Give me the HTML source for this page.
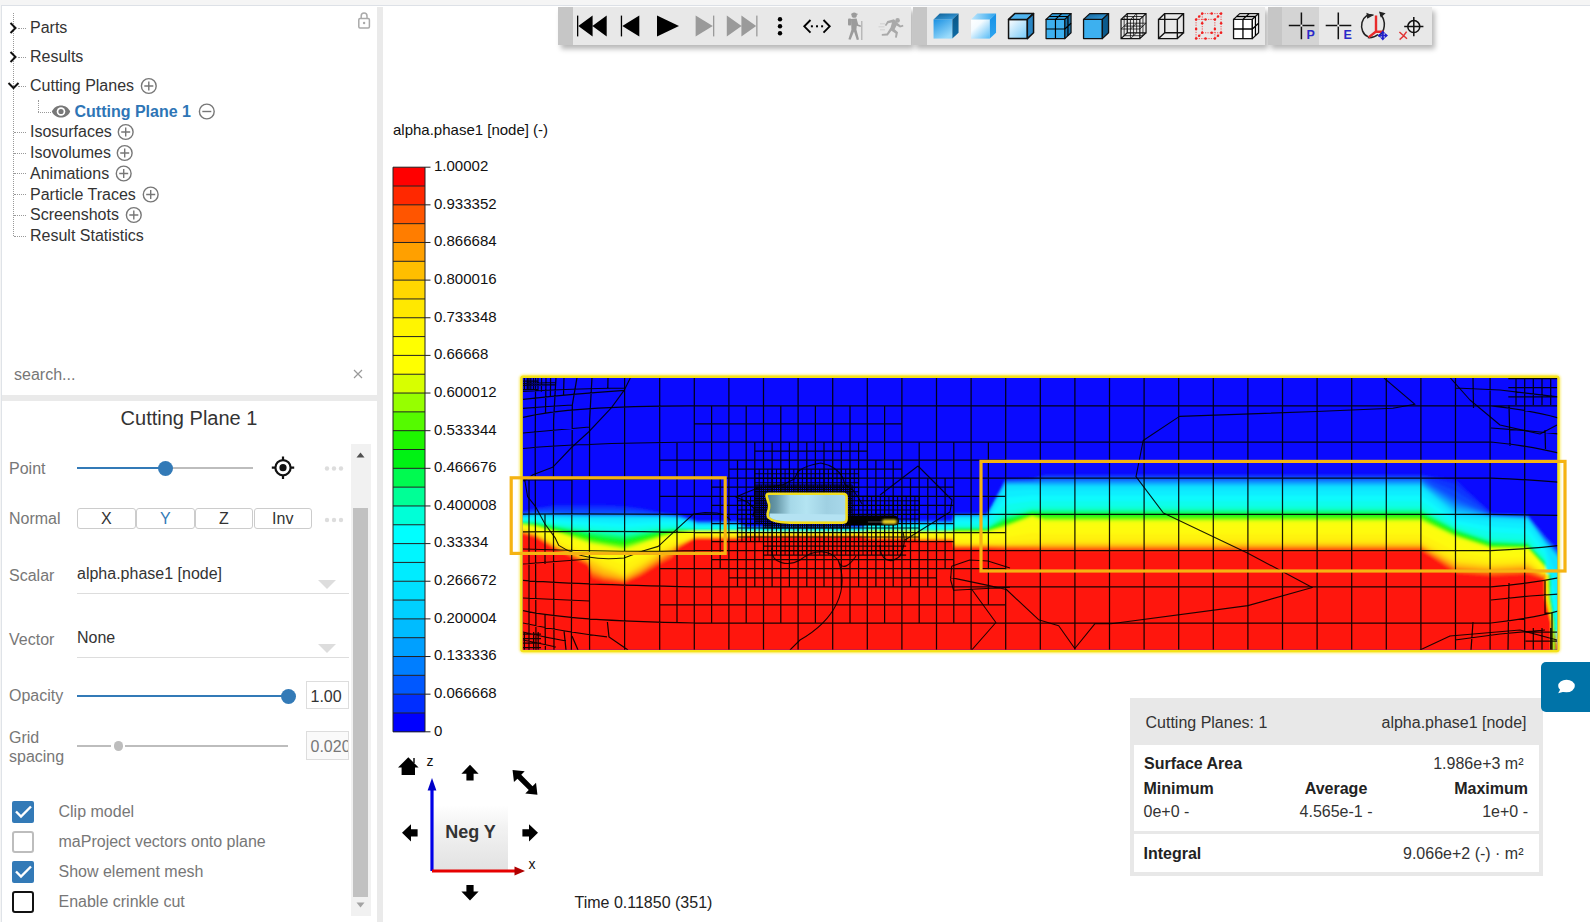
<!DOCTYPE html>
<html lang="en"><head><meta charset="utf-8"><title>Cutting Plane Viewer</title>
<style>
*{box-sizing:border-box;margin:0;padding:0}
html,body{width:1590px;height:922px;overflow:hidden;background:#f5f5f5;font-family:"Liberation Sans",Arial,sans-serif;font-size:16px;color:#333}
.abs{position:absolute}
#frame{position:absolute;left:1px;top:5px;width:1589px;height:917px;background:#fff;border-top:1px solid #dde1e7;border-left:1px solid #dfe3e8}
#vsplit{position:absolute;left:377px;top:7px;width:6px;height:915px;background:#eaeaea}
#hsplit{position:absolute;left:2px;top:395px;width:375px;height:6px;background:#eaeaea}
.t{position:absolute;white-space:nowrap;line-height:20px;height:20px}
.tree .t{color:#333}
.g{color:#777}
.dot-h{position:absolute;height:0;border-top:1px dotted #999}
.dot-v{position:absolute;width:0;border-left:1px dotted #999}
.nbtn{position:absolute;top:508px;height:21px;border:1px solid #ccc;border-radius:3px;background:#fff;text-align:center;line-height:20px;font-size:16px;color:#333}
.uline{position:absolute;height:1px;background:#ddd;left:77px;width:272px}
.vbox{position:absolute;left:306px;width:43px;height:28px;border:1px solid #ddd;font-size:16px;line-height:26px;padding-left:3.5px;padding-top:1.5px;overflow:hidden;white-space:nowrap}
.cb{position:absolute;left:12px;width:22px;height:22px;border-radius:2px}
.cb.on{background:#337ab7}
.tb{position:absolute;top:7px;height:38px;background:#e8e8e8;box-shadow:3px 4px 5px rgba(0,0,0,.28)}
.tb .h{position:absolute;left:0;top:0;height:38px;background:#c6c6c6}
.tb svg{position:absolute;top:0;left:0}
.lab{position:absolute;font-size:15px;color:#111;line-height:18px;height:18px;left:434px;white-space:nowrap}
.st{position:absolute;white-space:nowrap;line-height:20px;height:20px;font-size:16px;color:#333}
.b{font-weight:bold;color:#222}
</style></head><body>
<div id="frame"></div>
<div id="vsplit"></div>
<div id="hsplit"></div>

<!-- ===== TREE ===== -->
<div class="tree">
<div class="dot-v" style="left:13px;top:13px;height:223px"></div>
<div class="dot-h" style="left:18px;top:28px;width:8px"></div>
<div class="dot-h" style="left:18px;top:57px;width:8px"></div>
<div class="dot-h" style="left:18px;top:86px;width:8px"></div>
<div class="dot-v" style="left:38px;top:100px;height:12px"></div>
<div class="dot-h" style="left:38px;top:112px;width:13px"></div>
<div class="dot-h" style="left:14px;top:132px;width:12px"></div>
<div class="dot-h" style="left:14px;top:153px;width:12px"></div>
<div class="dot-h" style="left:14px;top:173px;width:12px"></div>
<div class="dot-h" style="left:14px;top:194px;width:12px"></div>
<div class="dot-h" style="left:14px;top:215px;width:12px"></div>
<div class="dot-h" style="left:14px;top:236px;width:12px"></div>
<svg class="abs" style="left:0;top:0" width="380" height="260" fill="none">
 <path d="M10.5 23 L15.5 28 L10.5 33" stroke="#111" stroke-width="2"/>
 <path d="M10.5 52 L15.5 57 L10.5 62" stroke="#111" stroke-width="2"/>
 <path d="M8.5 83 L13.5 88 L18.5 83" stroke="#111" stroke-width="2"/>
 <g stroke="#777" stroke-width="1.4">
  <circle cx="148.8" cy="86" r="7.4"/><path d="M144.3 86h9M148.8 81.5v9"/>
  <circle cx="125.7" cy="132" r="7.4"/><path d="M121.2 132h9M125.7 127.5v9"/>
  <circle cx="124.7" cy="153" r="7.4"/><path d="M120.2 153h9M124.7 148.5v9"/>
  <circle cx="123.7" cy="173.5" r="7.4"/><path d="M119.2 173.5h9M123.7 169v9"/>
  <circle cx="150.7" cy="194.5" r="7.4"/><path d="M146.2 194.5h9M150.7 190v9"/>
  <circle cx="133.8" cy="215" r="7.4"/><path d="M129.3 215h9M133.8 210.5v9"/>
  <circle cx="206.8" cy="111.5" r="7.4"/><path d="M202.3 111.5h9"/>
 </g>
 <!-- eye -->
 <path d="M51.8 111.5 C55.5 103.4 66.5 103.4 70.2 111.5 C66.5 119.6 55.5 119.6 51.8 111.5Z" fill="#777"/>
 <circle cx="61" cy="111.5" r="4.3" fill="#fff"/><circle cx="61" cy="111.5" r="2.6" fill="#777"/>
 <!-- lock -->
 <g stroke="#aaa" stroke-width="1.5"><rect x="358.8" y="18.5" width="10.6" height="9.4" rx="1.2"/><path d="M361.2 18.5v-2.6a2.9 2.9 0 0 1 5.8 0v2.6"/></g>
 <circle cx="364.1" cy="23" r="1.2" fill="#aaa"/>
</svg>
<div class="t" style="left:30px;top:18px">Parts</div>
<div class="t" style="left:30px;top:47px">Results</div>
<div class="t" style="left:30px;top:76px">Cutting Planes</div>
<div class="t" style="left:74.5px;top:102px;font-weight:bold;color:#2e75b6">Cutting Plane 1</div>
<div class="t" style="left:30px;top:122px">Isosurfaces</div>
<div class="t" style="left:30px;top:143px">Isovolumes</div>
<div class="t" style="left:30px;top:164px">Animations</div>
<div class="t" style="left:30px;top:185px">Particle Traces</div>
<div class="t" style="left:30px;top:205px">Screenshots</div>
<div class="t" style="left:30px;top:226px">Result Statistics</div>
</div>

<!-- search -->
<div class="t g" style="left:14px;top:365px;color:#777">search...</div>
<svg class="abs" style="left:352px;top:368px" width="12" height="12"><path d="M2 2l8 8M10 2l-8 8" stroke="#999" stroke-width="1.2"/></svg>

<!-- ===== PROPERTIES ===== -->
<div class="t" style="left:3px;width:372px;text-align:center;top:407px;font-size:20px;color:#333;line-height:22px;height:22px">Cutting Plane 1</div>
<div class="abs" style="left:351px;top:444px;width:20px;height:472px;background:#f1f1f1"></div>
<div class="abs" style="left:353px;top:508px;width:15px;height:389px;background:#c1c1c1"></div>
<svg class="abs" style="left:351px;top:444px" width="20" height="472"><path d="M5.5 13.5h8l-4-5z" fill="#505050"/><path d="M5.5 458.5h8l-4 5z" fill="#a3a3a3"/></svg>

<div class="t g" style="left:9px;top:459px">Point</div>
<div class="abs" style="left:77px;top:467px;width:176px;height:2px;background:#bdbdbd"></div>
<div class="abs" style="left:77px;top:467px;width:88px;height:2px;background:#337ab7"></div>
<div class="abs" style="left:157.5px;top:460.5px;width:15px;height:15px;border-radius:50%;background:#337ab7"></div>
<svg class="abs" style="left:270px;top:455px" width="26" height="26" fill="none" stroke="#111"><circle cx="13" cy="12.7" r="7.6" stroke-width="2.2"/><circle cx="13" cy="12.7" r="3.6" fill="#111" stroke="none"/><path d="M13 1.5v4M13 20v4M1.8 12.7h4M20.2 12.7h4" stroke-width="2.2"/></svg>
<svg class="abs" style="left:322px;top:462px" width="24" height="70" fill="#ddd"><circle cx="5" cy="6.5" r="2.2"/><circle cx="12" cy="6.5" r="2.2"/><circle cx="19" cy="6.5" r="2.2"/><circle cx="5" cy="58" r="2.2"/><circle cx="12" cy="58" r="2.2"/><circle cx="19" cy="58" r="2.2"/></svg>

<div class="t g" style="left:9px;top:509px">Normal</div>
<div class="nbtn" style="left:77px;width:58.5px">X</div>
<div class="nbtn" style="left:136px;width:58.5px;color:#337ab7">Y</div>
<div class="nbtn" style="left:195px;width:58px">Z</div>
<div class="nbtn" style="left:253.5px;width:58.5px">Inv</div>

<div class="t g" style="left:9px;top:566px">Scalar</div>
<div class="t" style="left:77px;top:564px;color:#333">alpha.phase1 [node]</div>
<svg class="abs" style="left:316px;top:578px" width="22" height="14"><path d="M2 2h18l-9 9z" fill="#ddd"/></svg>
<div class="uline" style="top:593px"></div>

<div class="t g" style="left:9px;top:630px">Vector</div>
<div class="t" style="left:77px;top:628px;color:#333">None</div>
<svg class="abs" style="left:316px;top:642px" width="22" height="14"><path d="M2 2h18l-9 9z" fill="#ddd"/></svg>
<div class="uline" style="top:657px"></div>

<div class="t g" style="left:9px;top:686px">Opacity</div>
<div class="abs" style="left:77px;top:695px;width:211px;height:2px;background:#337ab7"></div>
<div class="abs" style="left:280.5px;top:688.5px;width:15px;height:15px;border-radius:50%;background:#337ab7"></div>
<div class="vbox" style="top:681px;color:#333;background:#fff">1.00</div>

<div class="t g" style="left:9px;top:728px">Grid</div>
<div class="t g" style="left:9px;top:747px">spacing</div>
<div class="abs" style="left:77px;top:745px;width:211px;height:1.5px;background:#bdbdbd"></div>
<div class="abs" style="left:111px;top:740px;width:14px;height:11px;background:#fff"></div>
<div class="abs" style="left:113.5px;top:741px;width:9.5px;height:9.5px;border-radius:50%;background:#bdbdbd"></div>
<div class="vbox" style="top:731px;color:#777;background:#fafafa;height:29px">0.020</div>

<div class="cb on" style="top:800.5px"></div>
<div class="cb" style="top:830.5px;border:2px solid #bdbdbd;border-radius:3px"></div>
<div class="cb on" style="top:860.5px"></div>
<div class="cb" style="top:890.5px;border:2px solid #111;border-radius:3px"></div>
<svg class="abs" style="left:12px;top:800px" width="22" height="90" fill="none" stroke="#fff" stroke-width="2.4"><path d="M4 11.5l5 5L19 6.5"/><path d="M4 71.5l5 5L19 66.5"/></svg>
<div class="t g" style="left:58.5px;top:802px">Clip model</div>
<div class="t g" style="left:58.5px;top:832px">maProject vectors onto plane</div>
<div class="t g" style="left:58.5px;top:862px">Show element mesh</div>
<div class="t g" style="left:58.5px;top:892px">Enable crinkle cut</div>

<!-- ===== TOOLBARS ===== -->
<div class="tb" style="left:558px;width:353px"><div class="h" style="width:15px"></div>
<svg width="353" height="38"><rect x="19" y="8.6" width="1.3" height="20.8" fill="#000"/><path d="M20.3 19 L34.6 8.6 V29.4Z M34.4 19 L48.7 8.6 V29.4Z" fill="#000"/><rect x="62.8" y="8.6" width="1.3" height="20.8" fill="#000"/><path d="M64.3 19 L81.3 8.6 V29.4Z" fill="#000"/><path d="M99 8.4 L121 19 L99 29.6Z" fill="#000"/><path d="M137.6 8.6 L154.8 19 L137.6 29.4Z" fill="#9a9a9a"/><rect x="155" y="8.6" width="1.3" height="20.8" fill="#9a9a9a"/><path d="M168.8 8.6 L183.6 19 L168.8 29.4Z M183.4 8.6 L198.2 19 L183.4 29.4Z" fill="#9a9a9a"/><rect x="198.2" y="8.6" width="1.3" height="20.8" fill="#9a9a9a"/><circle cx="222" cy="12.3" r="2.2" fill="#000"/><circle cx="222" cy="19.3" r="2.2" fill="#000"/><circle cx="222" cy="26.3" r="2.2" fill="#000"/><path d="M252.5 13 L246.3 19.3 L252.5 25.6 M265.5 13 L271.7 19.3 L265.5 25.6" fill="none" stroke="#000" stroke-width="1.9"/><rect x="252.9" y="18.3" width="2" height="2" fill="#000"/><rect x="258" y="18.3" width="2" height="2" fill="#000"/><rect x="263.1" y="18.3" width="2" height="2" fill="#000"/><g fill="#9b9b9b" stroke="none"><circle cx="296.2" cy="8.2" r="2.6"/><path d="M293.2 6.6h6.4v1.2h-6.4z"/><path d="M293 12 L298.6 11.6 L300.2 17.4 L303 18.6 L302.6 20 L298.8 18.8 L298.4 22.6 L301 32.6 L298.8 33 L296 24.6 L292.6 32.8 L290.4 32.2 L293.4 22.8Z"/><rect x="290" y="11.5" width="3.2" height="7" rx="1"/><rect x="303.4" y="14" width="0.9" height="19"/></g><g fill="#a9a9a9" stroke="none"><circle cx="339.6" cy="13.4" r="2.3"/><path d="M329.4 14 L336 12.2 L339 15.6 L342.6 18.4 L345 17.8 L345.4 19.4 L342 20.4 L338.6 18.4 L336.6 22.2 L340 25.2 L338.8 30.8 L337 30.4 L337.6 26.4 L333.4 23.8 L329.8 28.6 L323.8 28.8 L323.8 27 L328.8 26.6 L332.6 20.6 L334 15.6 L330.2 16.2 L328.2 19 L326.8 18.2Z"/><path d="M322 16.5h5v.7h-5zM320.5 19.5h6v.7h-6zM322 22.5h5v.7h-5z" fill="#c8c8c8"/></g></svg>
</div>
<div class="tb" style="left:913px;width:352px"><div class="h" style="width:14px"></div>
<svg width="352" height="38"><defs><linearGradient id="gF1" x1="0" y1="0" x2="0.6" y2="1"><stop offset="0" stop-color="#1990e2"/><stop offset="1" stop-color="#9adbfb"/></linearGradient><linearGradient id="gT1" x1="0" y1="0" x2="1" y2="1"><stop offset="0" stop-color="#0d5c92"/><stop offset="1" stop-color="#3fa6e6"/></linearGradient><linearGradient id="gS1" x1="0" y1="0" x2="0" y2="1"><stop offset="0" stop-color="#095585"/><stop offset="1" stop-color="#0e6ca6"/></linearGradient><linearGradient id="gF2" x1="0" y1="0" x2="0.9" y2="1"><stop offset="0" stop-color="#ffffff"/><stop offset="0.35" stop-color="#f4fbff"/><stop offset="1" stop-color="#63c1f7"/></linearGradient><linearGradient id="gS2" x1="0" y1="0" x2="0" y2="1"><stop offset="0" stop-color="#1691e6"/><stop offset="1" stop-color="#2ea4ef"/></linearGradient><linearGradient id="gT2" x1="0" y1="0" x2="1" y2="0"><stop offset="0" stop-color="#bfe7fc"/><stop offset="1" stop-color="#2aa3ee"/></linearGradient><linearGradient id="gF3" x1="0" y1="0" x2="0.9" y2="1"><stop offset="0" stop-color="#ffffff"/><stop offset="1" stop-color="#79cbf8"/></linearGradient></defs><path d="M20.55 12.4 H39.35 V31.6 H20.55Z" fill="url(#gF1)"/><path d="M20.55 12.4 L26.75 6.6000000000000005 H45.550000000000004 L39.35 12.4Z" fill="url(#gT1)"/><path d="M39.35 12.4 L45.550000000000004 6.6000000000000005 V25.8 L39.35 31.6Z" fill="url(#gS1)"/><path d="M58.05 12.4 H76.85 V31.6 H58.05Z" fill="url(#gF2)"/><path d="M58.05 12.4 L64.25 6.6000000000000005 H83.05 L76.85 12.4Z" fill="url(#gT2)"/><path d="M76.85 12.4 L83.05 6.6000000000000005 V25.8 L76.85 31.6Z" fill="url(#gS2)"/><path d="M95.55 12.4 H114.35 V31.6 H95.55Z" fill="url(#gF3)" stroke="#111" stroke-width="1.5" stroke-linejoin="round"/><path d="M95.55 12.4 L101.75 6.6000000000000005 H120.55 L114.35 12.4Z" fill="#4fb3ee" stroke="#111" stroke-width="1.5" stroke-linejoin="round"/><path d="M114.35 12.4 L120.55 6.6000000000000005 V25.8 L114.35 31.6Z" fill="#2a86c4" stroke="#111" stroke-width="1.5" stroke-linejoin="round"/><path d="M133.05 12.4 H151.85 V31.6 H133.05Z" fill="#3db0ef" stroke="#111" stroke-width="1.2" stroke-linejoin="round"/><path d="M133.05 12.4 L139.25 6.6000000000000005 H158.04999999999998 L151.85 12.4Z" fill="#2f9ddc" stroke="#111" stroke-width="1.2" stroke-linejoin="round"/><path d="M151.85 12.4 L158.04999999999998 6.6000000000000005 V25.8 L151.85 31.6Z" fill="#1673ad" stroke="#111" stroke-width="1.2" stroke-linejoin="round"/><path d="M142.45 12.4 V31.6 M133.05 22.0 H151.85 M142.45 12.4 L148.64999999999998 6.6000000000000005 M136.15 9.5 H154.95 M154.95 9.5 V28.700000000000003 M151.85 22.0 L158.04999999999998 16.2" fill="none" stroke="#000" stroke-width="1.2"/><path d="M170.55 12.4 H189.35 V31.6 H170.55Z" fill="#3db0ef" stroke="#111" stroke-width="1.3" stroke-linejoin="round"/><path d="M170.55 12.4 L176.75 6.6000000000000005 H195.54999999999998 L189.35 12.4Z" fill="url(#gT1)" stroke="#111" stroke-width="1.3" stroke-linejoin="round"/><path d="M189.35 12.4 L195.54999999999998 6.6000000000000005 V25.8 L189.35 31.6Z" fill="#0b5a8c" stroke="#111" stroke-width="1.3" stroke-linejoin="round"/><path d="M208.05 12.4 H226.85 V31.6 H208.05Z M214.25 6.6000000000000005 H233.04999999999998 V25.8 H214.25Z M208.05 12.4 L214.25 6.6000000000000005 M226.85 12.4 L233.04999999999998 6.6000000000000005 M226.85 31.6 L233.04999999999998 25.8 M208.05 31.6 L214.25 25.8" fill="none" stroke="#111" stroke-width="1.2"/><path d="M217.45 12.4 V31.6 M208.05 22.0 H226.85 M223.64999999999998 6.6000000000000005 V25.8 M214.25 16.2 H233.04999999999998 M217.45 12.4 L223.64999999999998 6.6000000000000005 M217.45 31.6 L223.64999999999998 25.8 M208.05 22.0 L214.25 16.2 M226.85 22.0 L233.04999999999998 16.2 M211.15 9.5 H229.95 V28.700000000000003 H211.15Z M217.45 22.0 L223.64999999999998 16.2 M220.54999999999998 9.5 V28.700000000000003 M211.15 19.1 H229.95" fill="none" stroke="#111" stroke-width="0.8"/><path d="M245.55 12.4 H264.35 V31.6 H245.55Z M251.75 6.6000000000000005 H270.55 V25.8 H251.75Z M245.55 12.4 L251.75 6.6000000000000005 M264.35 12.4 L270.55 6.6000000000000005 M264.35 31.6 L270.55 25.8 M245.55 31.6 L251.75 25.8" fill="none" stroke="#111" stroke-width="1.4"/><path d="M283.05 12.4 H301.85 V31.6 H283.05Z M289.25 6.6000000000000005 H308.05 V25.8 H289.25Z M283.05 12.4 L289.25 6.6000000000000005 M301.85 12.4 L308.05 6.6000000000000005 M301.85 31.6 L308.05 25.8 M283.05 31.6 L289.25 25.8" fill="none" stroke="#f04040" stroke-width="0.9" stroke-dasharray="1.2 1.2"/><circle cx="283.1" cy="12.4" r="1.25" fill="#f02020"/><circle cx="283.1" cy="22.0" r="1.25" fill="#f02020"/><circle cx="283.1" cy="31.6" r="1.25" fill="#f02020"/><circle cx="292.5" cy="12.4" r="1.25" fill="#f02020"/><circle cx="292.5" cy="31.6" r="1.25" fill="#f02020"/><circle cx="301.9" cy="12.4" r="1.25" fill="#f02020"/><circle cx="301.9" cy="22.0" r="1.25" fill="#f02020"/><circle cx="301.9" cy="31.6" r="1.25" fill="#f02020"/><circle cx="289.2" cy="6.6" r="1.25" fill="#f02020"/><circle cx="289.2" cy="16.2" r="1.25" fill="#f02020"/><circle cx="289.2" cy="25.8" r="1.25" fill="#f02020"/><circle cx="298.7" cy="6.6" r="1.25" fill="#f02020"/><circle cx="298.7" cy="25.8" r="1.25" fill="#f02020"/><circle cx="308.1" cy="6.6" r="1.25" fill="#f02020"/><circle cx="308.1" cy="16.2" r="1.25" fill="#f02020"/><circle cx="308.1" cy="25.8" r="1.25" fill="#f02020"/><circle cx="286.2" cy="9.5" r="1.25" fill="#f02020"/><circle cx="286.2" cy="28.7" r="1.25" fill="#f02020"/><circle cx="305.0" cy="9.5" r="1.25" fill="#f02020"/><circle cx="305.0" cy="28.7" r="1.25" fill="#f02020"/><path d="M320.55 12.4 H339.35 V31.6 H320.55Z" fill="#fff" stroke="#111" stroke-width="1.3" stroke-linejoin="round"/><path d="M320.55 12.4 L326.75 6.6000000000000005 H345.55 L339.35 12.4Z" fill="#fff" stroke="#111" stroke-width="1.3" stroke-linejoin="round"/><path d="M339.35 12.4 L345.55 6.6000000000000005 V25.8 L339.35 31.6Z" fill="#fff" stroke="#111" stroke-width="1.3" stroke-linejoin="round"/><path d="M329.95000000000005 12.4 V31.6 M320.55 22.0 H339.35 M329.95000000000005 12.4 L336.15000000000003 6.6000000000000005 M323.65000000000003 9.5 H342.45000000000005 M342.45000000000005 9.5 V28.700000000000003 M339.35 22.0 L345.55 16.2" fill="none" stroke="#000" stroke-width="1.3"/></svg>
</div>
<div class="tb" style="left:1267.5px;width:164.5px"><div class="h" style="width:14px"></div><div style="position:absolute;left:14px;top:0;width:37.5px;height:38px;background:#d4d4d4"></div>
<svg width="165" height="38" style="font-family:'Liberation Sans',sans-serif"><path d="M33.4 5.6 V32.2 M20.799999999999997 18.6 H46.4" stroke="#111" stroke-width="1.5" fill="none"/><rect x="32.4" y="17.6" width="2" height="2" fill="#fff"/><text x="38.6" y="32.4" font-size="12.5" font-weight="bold" fill="#2a2ac8">P</text><path d="M70.3 5.6 V32.2 M57.699999999999996 18.6 H83.3" stroke="#111" stroke-width="1.5" fill="none"/><rect x="69.3" y="17.6" width="2" height="2" fill="#fff"/><text x="75.5" y="32.4" font-size="12.5" font-weight="bold" fill="#2a2ac8">E</text><g fill="none" stroke="#222" stroke-width="1.5"><path d="M105.5 8.2 A9 11 0 0 0 100 29.6"/><path d="M99.8 30.6 A14 14 0 0 0 110 27.5"/><path d="M110.2 29.2 A11 13 0 0 0 112.4 7.6"/></g><path d="M98.4 5.8 L105 8.4 L99.2 11.8Z M111 4.4 L117.6 6.2 L112.8 10.6Z" fill="#222"/><path d="M108 8.5 V24.5 L116 24.8 M108 24.5 L100.6 30.4" stroke="#e82a2a" stroke-width="2.4" fill="none"/><g fill="#2222cc"><path d="M114.8 23.4 l2.6 3 h-5.2z M114.8 33.6 l2.6 -3 h-5.2z M109.6 28.5 l3 -2.6 v5.2z M120 28.5 l-3 -2.6 v5.2z"/><rect x="113.9" y="25" width="1.8" height="7"/><rect x="111.3" y="27.6" width="7" height="1.8"/></g><circle cx="145.8" cy="19.6" r="6" fill="none" stroke="#111" stroke-width="1.5"/><path d="M145.8 10.000000000000002 V29.200000000000003 M136.20000000000002 19.6 H155.4" stroke="#111" stroke-width="1.5"/><path d="M131.4 25 L139 31.8 M138.6 24.6 C136.5 28 134 31 131.6 32.6" stroke="#e03434" stroke-width="1.5" fill="none"/></svg>
</div>

<!-- ===== LEGEND ===== -->
<div class="t" style="left:393px;top:120px;font-size:15px;color:#111">alpha.phase1 [node] (-)</div>
<svg class="abs" style="left:0;top:0" width="520" height="745">
<rect x="393" y="167.20" width="32" height="19.12" fill="rgb(255, 0, 0)"/>
<rect x="393" y="186.02" width="32" height="19.12" fill="rgb(255, 40, 0)"/>
<rect x="393" y="204.84" width="32" height="19.12" fill="rgb(255, 85, 0)"/>
<rect x="393" y="223.66" width="32" height="19.12" fill="rgb(255, 125, 0)"/>
<rect x="393" y="242.48" width="32" height="19.12" fill="rgb(255, 160, 0)"/>
<rect x="393" y="261.30" width="32" height="19.12" fill="rgb(255, 190, 0)"/>
<rect x="393" y="280.12" width="32" height="19.12" fill="rgb(255, 215, 0)"/>
<rect x="393" y="298.94" width="32" height="19.12" fill="rgb(255, 232, 0)"/>
<rect x="393" y="317.76" width="32" height="19.12" fill="rgb(255, 245, 0)"/>
<rect x="393" y="336.58" width="32" height="19.12" fill="rgb(255, 255, 0)"/>
<rect x="393" y="355.40" width="32" height="19.12" fill="rgb(255, 255, 0)"/>
<rect x="393" y="374.22" width="32" height="19.12" fill="rgb(215, 255, 0)"/>
<rect x="393" y="393.04" width="32" height="19.12" fill="rgb(150, 255, 0)"/>
<rect x="393" y="411.86" width="32" height="19.12" fill="rgb(85, 250, 0)"/>
<rect x="393" y="430.68" width="32" height="19.12" fill="rgb(30, 245, 0)"/>
<rect x="393" y="449.50" width="32" height="19.12" fill="rgb(0, 242, 20)"/>
<rect x="393" y="468.32" width="32" height="19.12" fill="rgb(0, 250, 80)"/>
<rect x="393" y="487.14" width="32" height="19.12" fill="rgb(0, 255, 150)"/>
<rect x="393" y="505.96" width="32" height="19.12" fill="rgb(0, 255, 215)"/>
<rect x="393" y="524.78" width="32" height="19.12" fill="rgb(0, 255, 255)"/>
<rect x="393" y="543.60" width="32" height="19.12" fill="rgb(0, 246, 255)"/>
<rect x="393" y="562.42" width="32" height="19.12" fill="rgb(0, 236, 255)"/>
<rect x="393" y="581.24" width="32" height="19.12" fill="rgb(0, 224, 255)"/>
<rect x="393" y="600.06" width="32" height="19.12" fill="rgb(0, 208, 255)"/>
<rect x="393" y="618.88" width="32" height="19.12" fill="rgb(0, 188, 255)"/>
<rect x="393" y="637.70" width="32" height="19.12" fill="rgb(0, 160, 255)"/>
<rect x="393" y="656.52" width="32" height="19.12" fill="rgb(0, 126, 255)"/>
<rect x="393" y="675.34" width="32" height="19.12" fill="rgb(0, 88, 255)"/>
<rect x="393" y="694.16" width="32" height="19.12" fill="rgb(0, 46, 255)"/>
<rect x="393" y="712.98" width="32" height="19.12" fill="rgb(0, 0, 255)"/>
<path d="M393 167.20H430.5M393 186.02H425M393 204.84H430.5M393 223.66H425M393 242.48H430.5M393 261.30H425M393 280.12H430.5M393 298.94H425M393 317.76H430.5M393 336.58H425M393 355.40H430.5M393 374.22H425M393 393.04H430.5M393 411.86H425M393 430.68H430.5M393 449.50H425M393 468.32H430.5M393 487.14H425M393 505.96H430.5M393 524.78H425M393 543.60H430.5M393 562.42H425M393 581.24H430.5M393 600.06H425M393 618.88H430.5M393 637.70H425M393 656.52H430.5M393 675.34H425M393 694.16H430.5M393 712.98H425M393 731.80H430.5M393 167.2V731.8M425 167.2V731.8" stroke="#222" stroke-width="1" fill="none"/>
</svg>
<div class="lab" style="top:157.0px">1.00002</div>
<div class="lab" style="top:194.6px">0.933352</div>
<div class="lab" style="top:232.3px">0.866684</div>
<div class="lab" style="top:269.9px">0.800016</div>
<div class="lab" style="top:307.6px">0.733348</div>
<div class="lab" style="top:345.2px">0.66668</div>
<div class="lab" style="top:382.8px">0.600012</div>
<div class="lab" style="top:420.5px">0.533344</div>
<div class="lab" style="top:458.1px">0.466676</div>
<div class="lab" style="top:495.8px">0.400008</div>
<div class="lab" style="top:533.4px">0.33334</div>
<div class="lab" style="top:571.0px">0.266672</div>
<div class="lab" style="top:608.7px">0.200004</div>
<div class="lab" style="top:646.3px">0.133336</div>
<div class="lab" style="top:684.0px">0.066668</div>
<div class="lab" style="top:721.6px">0</div>

<!-- ===== PLOT ===== -->
<svg class="abs" style="left:500px;top:365px" width="1080" height="300" viewBox="500 365 1080 300">
<defs><filter id="fb" x="-2%" y="-5%" width="104%" height="110%"><feGaussianBlur stdDeviation="0.9"/></filter><filter id="fb1"><feGaussianBlur stdDeviation="0.8"/></filter><filter id="fb05"><feGaussianBlur stdDeviation="0.45"/></filter><filter id="fglow" x="-2%" y="-5%" width="104%" height="110%"><feGaussianBlur stdDeviation="0.8"/></filter><clipPath id="cp"><rect x="522.8" y="378.0" width="1034.4" height="271.79999999999995"/></clipPath><linearGradient id="gHull" x1="0" y1="0" x2="1" y2="0"><stop offset="0" stop-color="#4f7f90"/><stop offset="0.12" stop-color="#6798a8"/><stop offset="0.3" stop-color="#a6d8e8"/><stop offset="0.5" stop-color="#b4e4f2"/><stop offset="0.75" stop-color="#9fd0e2"/><stop offset="1" stop-color="#a8d8ea"/></linearGradient></defs>
<rect x="521.4" y="376.6" width="1037" height="274.4" rx="2" fill="none" stroke="#fbe84a" stroke-width="4.4" opacity="0.75" filter="url(#fglow)"/>
<rect x="521.6" y="376.8" width="1036.6" height="274" rx="1.6" fill="#00f" stroke="#f5e21a" stroke-width="2.8"/>
<g clip-path="url(#cp)">
<rect x="521.8" y="377.0" width="1036.4" height="273.79999999999995" fill="rgb(10,10,255)"/><g filter="url(#fb)"><path d="M518.0 511.8L521.0 511.8L535.4 507.8L555.0 504.8L588.0 504.8L592.0 504.8L603.7 504.8L624.0 505.8L640.0 507.8L660.0 511.8L672.0 513.3L678.5 513.8L693.4 518.8L697.0 520.3L737.0 520.3L746.0 525.8L862.0 525.8L870.0 520.3L918.5 520.3L919.5 519.8L953.0 519.8L954.0 512.8L987.0 512.8L1005.0 478.8L1032.0 477.8L1045.0 474.3L1421.0 474.3L1456.0 479.8L1491.8 512.8L1527.6 513.8L1545.0 534.8L1559.0 549.8L1561.2 549.8V655.8H518.8Z" fill="rgb(10,35,255)"/><path d="M518.0 512.5L521.0 512.5L535.4 509.0L555.0 506.7L588.0 506.9L592.0 506.9L603.7 506.9L624.0 507.7L640.0 509.4L660.0 512.6L672.0 513.9L678.5 514.4L693.4 519.3L697.0 520.8L737.0 520.8L746.0 526.3L862.0 526.3L870.0 520.8L918.5 520.8L919.5 520.3L953.0 520.3L954.0 513.3L987.0 513.3L1005.0 479.4L1032.0 478.5L1045.0 475.4L1421.0 475.4L1456.0 484.2L1491.8 513.4L1527.6 514.4L1545.0 535.6L1559.0 550.6L1561.2 550.6V655.8H518.8Z" fill="rgb(10,54,255)"/><path d="M518.0 513.4L521.0 513.4L535.4 510.8L555.0 509.5L588.0 510.0L592.0 510.0L603.7 510.0L624.0 510.5L640.0 511.6L660.0 513.7L672.0 514.6L678.5 515.1L693.4 519.8L697.0 521.3L737.0 521.3L746.0 526.7L862.0 526.7L870.0 521.3L918.5 521.3L919.5 520.8L953.0 520.8L954.0 513.8L987.0 513.8L1005.0 480.1L1032.0 479.4L1045.0 477.0L1421.0 477.0L1456.0 491.2L1491.8 514.1L1527.6 515.1L1545.0 536.7L1559.0 551.7L1561.2 551.7V655.8H518.8Z" fill="rgb(10,74,255)"/><path d="M518.0 514.3L521.0 514.3L535.4 512.6L555.0 512.3L588.0 513.2L592.0 513.2L603.7 513.2L624.0 513.3L640.0 513.9L660.0 514.7L672.0 515.3L678.5 515.8L693.4 520.4L697.0 521.9L737.0 521.9L746.0 527.2L862.0 527.2L870.0 521.9L918.5 521.9L919.5 521.4L953.0 521.4L954.0 514.4L987.0 514.4L1005.0 480.8L1032.0 480.3L1045.0 478.6L1421.0 478.6L1456.0 498.2L1491.8 514.8L1527.6 515.8L1545.0 537.7L1559.0 552.7L1561.2 552.7V655.8H518.8Z" fill="rgb(10,95,255)"/><path d="M518.0 514.7L521.0 514.7L535.4 513.2L555.0 513.4L588.0 514.3L592.0 514.3L603.7 514.3L624.0 514.3L640.0 514.8L660.0 515.2L672.0 515.7L678.5 516.2L693.4 520.7L697.0 522.2L737.0 522.2L746.0 527.4L862.0 527.4L870.0 522.2L918.5 522.2L919.5 521.7L953.0 521.7L954.0 514.7L987.0 514.7L1005.0 481.5L1032.0 481.0L1045.0 479.7L1421.0 479.7L1456.0 501.5L1491.8 515.3L1527.6 516.4L1545.0 538.6L1559.0 553.6L1561.2 553.6V655.8H518.8Z" fill="rgb(10,114,255)"/><path d="M518.0 515.0L521.0 515.0L535.4 513.5L555.0 513.9L588.0 514.8L592.0 514.8L603.7 514.8L624.0 514.8L640.0 515.1L660.0 515.5L672.0 516.0L678.5 516.5L693.4 520.9L697.0 522.5L737.0 522.5L746.0 527.6L862.0 527.6L870.0 522.5L918.5 522.5L919.5 522.0L953.0 522.0L954.0 515.0L987.0 515.0L1005.0 482.1L1032.0 481.7L1045.0 480.7L1421.0 480.7L1456.0 503.4L1491.8 515.6L1527.6 516.9L1545.0 539.3L1559.0 554.5L1561.2 554.5V655.8H518.8Z" fill="rgb(10,131,255)"/><path d="M518.0 515.3L521.0 515.3L535.4 513.8L555.0 514.4L588.0 515.2L592.0 515.2L603.7 515.2L624.0 515.2L640.0 515.5L660.0 515.8L672.0 516.3L678.5 516.8L693.4 521.2L697.0 522.8L737.0 522.8L746.0 527.7L862.0 527.7L870.0 522.8L918.5 522.8L919.5 522.3L953.0 522.3L954.0 515.3L987.0 515.3L1005.0 482.7L1032.0 482.4L1045.0 481.7L1421.0 481.7L1456.0 505.4L1491.8 516.0L1527.6 517.4L1545.0 540.0L1559.0 555.4L1561.2 555.4V655.8H518.8Z" fill="rgb(10,149,255)"/><path d="M518.0 515.7L521.0 515.7L535.4 514.2L555.0 514.8L588.0 515.6L592.0 515.6L603.7 515.6L624.0 515.6L640.0 515.9L660.0 516.2L672.0 516.7L678.5 517.2L693.4 521.4L697.0 523.2L737.0 523.2L746.0 527.9L862.0 527.9L870.0 523.2L918.5 523.2L919.5 522.7L953.0 522.7L954.0 515.7L987.0 515.7L1005.0 483.3L1032.0 483.0L1045.0 482.7L1421.0 482.7L1456.0 507.4L1491.8 516.4L1527.6 517.8L1545.0 540.8L1559.0 556.2L1561.2 556.2V655.8H518.8Z" fill="rgb(10,166,255)"/><path d="M518.0 516.0L521.0 516.0L535.4 514.5L555.0 515.3L588.0 516.0L592.0 516.0L603.7 516.0L624.0 516.0L640.0 516.3L660.0 516.5L672.0 517.0L678.5 517.5L693.4 521.7L697.0 523.5L737.0 523.5L746.0 528.0L862.0 528.0L870.0 523.5L918.5 523.5L919.5 523.0L953.0 523.0L954.0 516.0L987.0 516.0L1005.0 483.9L1032.0 483.7L1045.0 483.7L1421.0 483.7L1456.0 509.4L1491.8 516.8L1527.6 518.3L1545.0 541.5L1559.0 557.1L1561.2 557.1V655.8H518.8Z" fill="rgb(10,182,255)"/><path d="M518.0 516.3L521.0 516.3L535.4 514.8L555.0 515.8L588.0 516.5L592.0 516.5L603.7 516.5L624.0 516.5L640.0 516.6L660.0 516.8L672.0 517.3L678.5 517.8L693.4 521.9L697.0 523.8L737.0 523.8L746.0 528.1L862.0 528.1L870.0 523.8L918.5 523.8L919.5 523.3L953.0 523.3L954.0 516.3L987.0 516.3L1005.0 484.5L1032.0 484.4L1045.0 484.7L1421.0 484.7L1456.0 511.3L1491.8 517.1L1527.6 518.8L1545.0 542.2L1559.0 558.0L1561.2 558.0V655.8H518.8Z" fill="rgb(10,197,255)"/><path d="M518.0 516.6L521.0 516.6L535.4 515.1L555.0 516.3L588.0 516.9L592.0 516.9L603.7 516.9L624.0 516.9L640.0 517.0L660.0 517.1L672.0 517.6L678.5 518.1L693.4 522.2L697.0 524.1L737.0 524.1L746.0 528.3L862.0 528.3L870.0 524.1L918.5 524.1L919.5 523.6L953.0 523.6L954.0 516.6L987.0 516.6L1005.0 485.2L1032.0 485.1L1045.0 485.6L1421.0 485.6L1456.0 513.3L1491.8 517.5L1527.6 519.3L1545.0 543.0L1559.0 558.8L1561.2 558.8V655.8H518.8Z" fill="rgb(10,213,255)"/><path d="M518.0 516.9L521.0 516.9L535.4 515.4L555.0 516.8L588.0 517.3L592.0 517.3L603.7 517.3L624.0 517.3L640.0 517.4L660.0 517.4L672.0 517.9L678.5 518.4L693.4 522.4L697.0 524.4L737.0 524.4L746.0 528.4L862.0 528.4L870.0 524.4L918.5 524.4L919.5 523.9L953.0 523.9L954.0 516.9L987.0 516.9L1005.0 485.8L1032.0 485.7L1045.0 486.6L1421.0 486.6L1456.0 515.3L1491.8 517.9L1527.6 519.8L1545.0 543.7L1559.0 559.7L1561.2 559.7V655.8H518.8Z" fill="rgb(10,226,255)"/><path d="M518.0 517.6L521.0 517.6L535.4 516.5L555.0 518.2L588.0 519.3L592.0 519.4L603.7 519.6L624.0 519.9L640.0 519.6L660.0 519.2L672.0 519.5L678.5 520.0L693.4 523.5L697.0 525.3L737.0 525.3L746.0 528.9L862.0 528.9L870.0 525.3L918.5 525.3L919.5 524.9L953.0 524.9L954.0 518.5L987.0 518.5L1005.0 490.5L1032.0 489.5L1045.0 490.3L1421.0 490.3L1456.0 517.8L1491.8 521.4L1527.6 523.4L1545.0 546.5L1559.0 580.0L1561.2 580.0V655.8H518.8Z" fill="rgb(10,238,255)"/><path d="M518.0 518.6L521.0 518.6L535.4 518.1L555.0 520.2L588.0 522.3L592.0 522.5L603.7 522.9L624.0 523.7L640.0 522.9L660.0 521.9L672.0 522.0L678.5 522.3L693.4 525.1L697.0 526.5L737.0 526.5L746.0 529.6L862.0 529.6L870.0 526.5L918.5 526.5L919.5 526.4L953.0 526.4L954.0 521.0L987.0 521.0L1005.0 497.6L1032.0 495.2L1045.0 495.6L1421.0 495.6L1456.0 520.8L1491.8 526.8L1527.6 528.8L1545.0 550.4L1559.0 612.0L1561.2 612.0V655.8H518.8Z" fill="rgb(10,250,253)"/><path d="M518.0 519.6L521.0 519.6L535.4 519.7L555.0 522.2L588.0 525.3L592.0 525.6L603.7 526.2L624.0 527.5L640.0 526.2L660.0 524.6L672.0 524.5L678.5 524.6L693.4 526.7L697.0 527.7L737.0 527.7L746.0 530.3L862.0 530.3L870.0 527.7L918.5 527.7L919.5 527.9L953.0 527.9L954.0 523.5L987.0 523.5L1005.0 504.7L1032.0 500.9L1045.0 500.9L1421.0 500.9L1456.0 523.8L1491.8 532.2L1527.6 534.2L1545.0 554.3L1559.0 644.0L1561.2 644.0V655.8H518.8Z" fill="rgb(10,253,235)"/><path d="M518.0 520.6L521.0 520.6L535.4 521.3L555.0 524.1L588.0 528.2L592.0 528.7L603.7 529.5L624.0 531.3L640.0 529.5L660.0 527.3L672.0 526.9L678.5 527.0L693.4 528.3L697.0 529.0L737.0 529.0L746.0 531.0L862.0 531.0L870.0 529.0L918.5 529.0L919.5 529.4L953.0 529.4L954.0 525.9L987.0 525.9L1005.0 511.9L1032.0 506.5L1045.0 506.2L1421.0 506.2L1456.0 526.7L1491.8 537.6L1527.6 539.6L1545.0 558.3L1559.0 654.8L1561.2 654.8V655.8H518.8Z" fill="rgb(10,255,214)"/><path d="M518.0 521.3L521.0 521.3L535.4 522.3L555.0 525.6L588.0 530.5L592.0 531.1L603.7 532.2L624.0 534.3L640.0 532.0L660.0 529.2L672.0 528.5L678.5 528.3L693.4 529.2L697.0 529.6L737.0 529.6L746.0 531.4L862.0 531.4L870.0 529.6L918.5 529.6L919.5 530.1L953.0 530.1L954.0 527.4L987.0 527.4L1005.0 516.1L1032.0 509.6L1045.0 509.5L1421.0 509.5L1456.0 528.7L1491.8 540.7L1527.6 542.6L1545.0 560.7L1559.0 654.8L1561.2 654.8V655.8H518.8Z" fill="rgb(10,255,163)"/><path d="M518.0 521.8L521.0 521.8L535.4 523.0L555.0 526.5L588.0 532.4L592.0 533.1L603.7 534.5L624.0 536.7L640.0 533.9L660.0 530.4L672.0 529.3L678.5 529.0L693.4 529.5L697.0 529.9L737.0 529.9L746.0 531.5L862.0 531.5L870.0 529.9L918.5 529.9L919.5 530.4L953.0 530.4L954.0 528.2L987.0 528.2L1005.0 518.1L1032.0 510.7L1045.0 511.2L1421.0 511.2L1456.0 529.9L1491.8 541.9L1527.6 543.5L1545.0 561.9L1559.0 654.8L1561.2 654.8V655.8H518.8Z" fill="rgb(10,253,110)"/><path d="M518.0 522.3L521.0 522.3L535.4 523.6L555.0 527.5L588.0 534.2L592.0 535.0L603.7 536.7L624.0 539.0L640.0 535.7L660.0 531.7L672.0 530.2L678.5 529.6L693.4 529.8L697.0 530.1L737.0 530.1L746.0 531.6L862.0 531.6L870.0 530.1L918.5 530.1L919.5 530.6L953.0 530.6L954.0 528.9L987.0 528.9L1005.0 520.0L1032.0 511.8L1045.0 512.9L1421.0 512.9L1456.0 531.2L1491.8 543.2L1527.6 544.5L1545.0 563.2L1559.0 654.8L1561.2 654.8V655.8H518.8Z" fill="rgb(12,250,60)"/><path d="M518.0 522.8L521.0 522.8L535.4 524.2L555.0 528.5L588.0 536.1L592.0 537.0L603.7 538.9L624.0 541.3L640.0 537.6L660.0 532.9L672.0 531.1L678.5 530.2L693.4 530.1L697.0 530.4L737.0 530.4L746.0 531.7L862.0 531.7L870.0 530.4L918.5 530.4L919.5 530.9L953.0 530.9L954.0 529.6L987.0 529.6L1005.0 522.0L1032.0 512.9L1045.0 514.6L1421.0 514.6L1456.0 532.4L1491.8 544.4L1527.6 545.5L1545.0 564.4L1559.0 654.8L1561.2 654.8V655.8H518.8Z" fill="rgb(20,248,20)"/><path d="M518.0 523.2L521.0 523.2L535.4 524.7L555.0 529.3L588.0 537.7L592.0 538.7L603.7 540.7L624.0 543.3L640.0 539.2L660.0 534.0L672.0 531.8L678.5 530.7L693.4 530.4L697.0 530.6L737.0 530.6L746.0 531.8L862.0 531.8L870.0 530.6L918.5 530.6L919.5 531.1L953.0 531.1L954.0 530.2L987.0 530.2L1005.0 523.5L1032.0 513.9L1045.0 516.1L1421.0 516.1L1456.0 533.5L1491.8 545.4L1527.6 546.3L1545.0 565.3L1559.0 654.8L1561.2 654.8V655.8H518.8Z" fill="rgb(49,249,14)"/><path d="M518.0 523.6L521.0 523.6L535.4 525.2L555.0 530.0L588.0 539.0L592.0 540.0L603.7 542.0L624.0 544.9L640.0 540.5L660.0 534.9L672.0 532.5L678.5 531.2L693.4 530.7L697.0 530.8L737.0 530.8L746.0 531.9L862.0 531.9L870.0 530.8L918.5 530.8L919.5 531.3L953.0 531.3L954.0 530.7L987.0 530.7L1005.0 524.4L1032.0 514.6L1045.0 517.3L1421.0 517.3L1456.0 534.4L1491.8 546.1L1527.6 546.9L1545.0 565.9L1559.0 654.8L1561.2 654.8V655.8H518.8Z" fill="rgb(85,251,10)"/><path d="M518.0 523.9L521.0 523.9L535.4 525.7L555.0 530.7L588.0 540.3L592.0 541.3L603.7 543.3L624.0 546.5L640.0 541.8L660.0 535.9L672.0 533.2L678.5 531.7L693.4 531.0L697.0 531.0L737.0 531.0L746.0 532.0L862.0 532.0L870.0 531.0L918.5 531.0L919.5 531.5L953.0 531.5L954.0 531.2L987.0 531.2L1005.0 525.4L1032.0 515.4L1045.0 518.6L1421.0 518.6L1456.0 535.4L1491.8 546.9L1527.6 547.4L1545.0 566.4L1559.0 654.8L1561.2 654.8V655.8H518.8Z" fill="rgb(132,254,10)"/><path d="M518.0 524.3L521.0 524.3L535.4 526.2L555.0 531.3L588.0 541.6L592.0 542.6L603.7 544.6L624.0 548.1L640.0 543.1L660.0 536.8L672.0 533.8L678.5 532.2L693.4 531.2L697.0 531.2L737.0 531.2L746.0 532.1L862.0 532.1L870.0 531.2L918.5 531.2L919.5 531.7L953.0 531.7L954.0 531.7L987.0 531.7L1005.0 526.3L1032.0 516.2L1045.0 519.8L1421.0 519.8L1456.0 536.3L1491.8 547.7L1527.6 548.0L1545.0 567.0L1559.0 654.8L1561.2 654.8V655.8H518.8Z" fill="rgb(188,255,10)"/><path d="M518.0 524.7L521.0 524.7L535.4 526.6L555.0 532.0L588.0 543.0L592.0 544.0L603.7 546.0L624.0 549.7L640.0 544.5L660.0 537.8L672.0 534.5L678.5 532.6L693.4 531.5L697.0 531.4L737.0 531.4L746.0 532.2L862.0 532.2L870.0 531.4L918.5 531.4L919.5 531.9L953.0 531.9L954.0 532.1L987.0 532.1L1005.0 527.3L1032.0 516.9L1045.0 521.0L1421.0 521.0L1456.0 537.3L1491.8 548.4L1527.6 548.6L1545.0 567.6L1559.0 654.8L1561.2 654.8V655.8H518.8Z" fill="rgb(238,255,10)"/><path d="M518.0 525.2L521.0 525.2L535.4 527.4L555.0 533.2L588.0 544.8L592.0 545.8L603.7 548.1L624.0 552.4L640.0 546.6L660.0 539.2L672.0 535.7L678.5 533.6L693.4 532.0L697.0 531.8L737.0 531.8L746.0 532.5L862.0 532.5L870.0 531.8L918.5 531.8L919.5 532.4L953.0 532.4L954.0 533.2L987.0 533.2L1005.0 528.9L1032.0 519.0L1045.0 523.2L1421.0 523.2L1456.0 539.3L1491.8 549.9L1527.6 549.8L1545.0 568.4L1559.0 654.8L1561.2 654.8V655.8H518.8Z" fill="rgb(252,253,10)"/><path d="M518.0 526.3L521.0 526.3L535.4 529.0L555.0 536.3L588.0 548.3L592.0 549.3L603.7 553.0L624.0 558.7L640.0 551.7L660.0 542.7L672.0 538.7L678.5 536.3L693.4 533.6L697.0 533.0L737.0 533.0L746.0 533.2L862.0 533.2L870.0 533.0L918.5 533.0L919.5 534.0L953.0 534.0L954.0 536.2L987.0 536.2L1005.0 533.2L1032.0 526.0L1045.0 528.7L1421.0 528.7L1456.0 545.3L1491.8 554.0L1527.6 553.3L1545.0 570.0L1559.0 654.8L1561.2 654.8V655.8H518.8Z" fill="rgb(254,251,10)"/><path d="M518.0 527.4L521.0 527.4L535.4 530.6L555.0 539.5L588.0 551.9L592.0 552.9L603.7 557.9L624.0 565.0L640.0 556.7L660.0 546.1L672.0 541.7L678.5 539.1L693.4 535.2L697.0 534.2L737.0 534.2L746.0 533.9L862.0 533.9L870.0 534.2L918.5 534.2L919.5 535.6L953.0 535.6L954.0 539.2L987.0 539.2L1005.0 537.4L1032.0 533.0L1045.0 534.1L1421.0 534.1L1456.0 551.4L1491.8 558.1L1527.6 556.9L1545.0 571.6L1559.0 654.8L1561.2 654.8V655.8H518.8Z" fill="rgb(255,243,10)"/><path d="M518.0 528.5L521.0 528.5L535.4 532.3L555.0 542.6L588.0 555.4L592.0 556.4L603.7 562.8L624.0 571.2L640.0 561.8L660.0 549.5L672.0 544.7L678.5 541.8L693.4 536.8L697.0 535.5L737.0 535.5L746.0 534.7L862.0 534.7L870.0 535.5L918.5 535.5L919.5 537.3L953.0 537.3L954.0 542.2L987.0 542.2L1005.0 541.6L1032.0 539.9L1045.0 539.6L1421.0 539.6L1456.0 557.4L1491.8 562.2L1527.6 560.4L1545.0 573.3L1559.0 654.8L1561.2 654.8V655.8H518.8Z" fill="rgb(255,232,10)"/><path d="M518.0 529.3L521.0 529.3L535.4 533.3L555.0 544.3L588.0 557.5L592.0 559.4L603.7 566.2L624.0 574.6L640.0 564.9L660.0 551.9L672.0 546.6L678.5 543.3L693.4 537.6L697.0 536.2L737.0 536.2L746.0 535.1L862.0 535.1L870.0 536.2L918.5 536.2L919.5 538.2L953.0 538.2L954.0 543.8L987.0 543.8L1005.0 543.8L1032.0 543.4L1045.0 542.5L1421.0 542.5L1456.0 560.9L1491.8 564.7L1527.6 562.7L1545.0 574.3L1559.0 654.8L1561.2 654.8V655.8H518.8Z" fill="rgb(255,220,10)"/><path d="M518.0 529.7L521.0 529.7L535.4 533.7L555.0 544.9L588.0 558.5L592.0 561.8L603.7 568.3L624.0 575.8L640.0 566.4L660.0 553.4L672.0 547.8L678.5 543.9L693.4 537.8L697.0 536.6L737.0 536.6L746.0 535.2L862.0 535.2L870.0 536.6L918.5 536.6L919.5 538.4L953.0 538.4L954.0 544.2L987.0 544.2L1005.0 544.4L1032.0 544.0L1045.0 543.5L1421.0 543.5L1456.0 562.4L1491.8 566.1L1527.6 564.1L1545.0 574.9L1559.0 654.8L1561.2 654.8V655.8H518.8Z" fill="rgb(255,207,10)"/><path d="M518.0 530.2L521.0 530.2L535.4 534.2L555.0 545.5L588.0 559.4L592.0 564.3L603.7 570.3L624.0 576.9L640.0 567.9L660.0 554.9L672.0 548.9L678.5 544.5L693.4 538.0L697.0 537.0L737.0 537.0L746.0 535.4L862.0 535.4L870.0 537.0L918.5 537.0L919.5 538.7L953.0 538.7L954.0 544.7L987.0 544.7L1005.0 545.0L1032.0 544.7L1045.0 544.4L1421.0 544.4L1456.0 563.9L1491.8 567.4L1527.6 565.4L1545.0 575.5L1559.0 654.8L1561.2 654.8V655.8H518.8Z" fill="rgb(255,193,10)"/><path d="M518.0 530.7L521.0 530.7L535.4 534.7L555.0 546.0L588.0 560.4L592.0 566.8L603.7 572.4L624.0 578.0L640.0 569.4L660.0 556.4L672.0 550.0L678.5 545.0L693.4 538.2L697.0 537.3L737.0 537.3L746.0 535.5L862.0 535.5L870.0 537.3L918.5 537.3L919.5 539.0L953.0 539.0L954.0 545.2L987.0 545.2L1005.0 545.5L1032.0 545.4L1045.0 545.4L1421.0 545.4L1456.0 565.4L1491.8 568.7L1527.6 566.7L1545.0 576.0L1559.0 654.8L1561.2 654.8V655.8H518.8Z" fill="rgb(255,178,10)"/><path d="M518.0 531.2L521.0 531.2L535.4 535.2L555.0 546.6L588.0 561.3L592.0 569.2L603.7 574.5L624.0 579.2L640.0 570.9L660.0 557.9L672.0 551.2L678.5 545.6L693.4 538.4L697.0 537.7L737.0 537.7L746.0 535.7L862.0 535.7L870.0 537.7L918.5 537.7L919.5 539.3L953.0 539.3L954.0 545.7L987.0 545.7L1005.0 546.1L1032.0 546.0L1045.0 546.3L1421.0 546.3L1456.0 566.9L1491.8 570.0L1527.6 568.0L1545.0 576.6L1559.0 654.8L1561.2 654.8V655.8H518.8Z" fill="rgb(255,156,10)"/><path d="M518.0 531.6L521.0 531.6L535.4 535.6L555.0 547.2L588.0 562.2L592.0 571.5L603.7 576.3L624.0 580.2L640.0 572.3L660.0 559.3L672.0 552.4L678.5 546.2L693.4 538.6L697.0 538.1L737.0 538.1L746.0 535.9L862.0 535.9L870.0 538.1L918.5 538.1L919.5 539.6L953.0 539.6L954.0 546.2L987.0 546.2L1005.0 546.7L1032.0 546.7L1045.0 547.2L1421.0 547.2L1456.0 568.3L1491.8 571.3L1527.6 569.3L1545.0 577.2L1559.0 654.8L1561.2 654.8V655.8H518.8Z" fill="rgb(255,134,10)"/><path d="M518.0 532.2L521.0 532.2L535.4 536.2L555.0 547.8L588.0 563.1L592.0 573.1L603.7 577.6L624.0 581.1L640.0 573.3L660.0 560.6L672.0 553.8L678.5 546.8L693.4 538.9L697.0 538.4L737.0 538.4L746.0 536.1L862.0 536.1L870.0 538.4L918.5 538.4L919.5 539.9L953.0 539.9L954.0 546.8L987.0 546.8L1005.0 547.4L1032.0 547.6L1045.0 548.1L1421.0 548.1L1456.0 569.6L1491.8 572.6L1527.6 570.6L1545.0 577.8L1559.0 654.8L1561.2 654.8V655.8H518.8Z" fill="rgb(255,112,10)"/><path d="M518.0 532.7L521.0 532.7L535.4 536.7L555.0 548.4L588.0 563.9L592.0 574.7L603.7 578.8L624.0 581.9L640.0 574.3L660.0 561.8L672.0 555.3L678.5 547.4L693.4 539.2L697.0 538.7L737.0 538.7L746.0 536.3L862.0 536.3L870.0 538.7L918.5 538.7L919.5 540.2L953.0 540.2L954.0 547.4L987.0 547.4L1005.0 548.1L1032.0 548.4L1045.0 548.9L1421.0 548.9L1456.0 570.8L1491.8 573.8L1527.6 571.8L1545.0 578.4L1559.0 654.8L1561.2 654.8V655.8H518.8Z" fill="rgb(255,89,10)"/><path d="M518.0 533.2L521.0 533.2L535.4 537.2L555.0 549.0L588.0 564.7L592.0 576.4L603.7 580.0L624.0 582.7L640.0 575.4L660.0 563.0L672.0 556.7L678.5 548.0L693.4 539.5L697.0 539.0L737.0 539.0L746.0 536.5L862.0 536.5L870.0 539.0L918.5 539.0L919.5 540.5L953.0 540.5L954.0 548.0L987.0 548.0L1005.0 548.9L1032.0 549.2L1045.0 549.7L1421.0 549.7L1456.0 572.0L1491.8 575.0L1527.6 573.0L1545.0 579.0L1559.0 654.8L1561.2 654.8V655.8H518.8Z" fill="rgb(255,65,10)"/><path d="M518.0 533.7L521.0 533.7L535.4 537.7L555.0 549.6L588.0 565.5L592.0 578.0L603.7 581.3L624.0 583.5L640.0 576.4L660.0 564.3L672.0 558.1L678.5 548.6L693.4 539.8L697.0 539.3L737.0 539.3L746.0 536.7L862.0 536.7L870.0 539.3L918.5 539.3L919.5 540.8L953.0 540.8L954.0 548.6L987.0 548.6L1005.0 549.6L1032.0 550.0L1045.0 550.5L1421.0 550.5L1456.0 573.3L1491.8 576.3L1527.6 574.3L1545.0 579.6L1559.0 654.8L1561.2 654.8V655.8H518.8Z" fill="rgb(255,42,10)"/><path d="M518.0 534.2L521.0 534.2L535.4 538.2L555.0 550.2L588.0 566.2L592.0 579.2L603.7 582.2L624.0 584.2L640.0 577.2L660.0 565.2L672.0 559.2L678.5 549.2L693.4 540.2L697.0 539.7L737.0 539.7L746.0 537.0L862.0 537.0L870.0 539.7L918.5 539.7L919.5 541.2L953.0 541.2L954.0 549.2L987.0 549.2L1005.0 550.2L1032.0 550.7L1045.0 551.2L1421.0 551.2L1456.0 574.2L1491.8 577.2L1527.6 575.2L1545.0 580.2L1559.0 654.8L1561.2 654.8V655.8H518.8Z" fill="rgb(255,18,10)"/><path d="M1544.8 574 L1545.3 598 L1551.635 622 L1552.135 652" fill="none" stroke="#ff7a00" stroke-width="1.6"/><path d="M1546.9 574 L1547.4 598 L1552.58 622 L1553.08 652" fill="none" stroke="#fff000" stroke-width="3"/><path d="M1549.4 574 L1549.9 598 L1553.705 622 L1554.205 652" fill="none" stroke="#20f020" stroke-width="2.2"/></g>
<path d="M694.3 378.0V649.8M728.9 378.0V649.8M763.5 378.0V649.8M798.1 378.0V649.8M832.7 378.0V649.8M867.3 378.0V649.8M901.9 378.0V649.8M936.5 378.0V649.8M971.1 378.0V649.8M1005.7 378.0V649.8M1040.3 378.0V649.8M1074.9 378.0V649.8M1109.5 378.0V649.8M1144.1 378.0V649.8M1178.7 378.0V649.8M1213.3 378.0V649.8M1247.9 378.0V649.8M1282.5 378.0V649.8M1317.1 378.0V649.8M1351.7 378.0V649.8M1386.3 378.0V649.8M1420.9 378.0V649.8M1455.5 378.0V649.8M1490.1 378.0V649.8M694.3 405.8H1491.0M694.3 442.0H1491.0M694.3 478.2H1491.0M694.3 514.4H1491.0M694.3 550.6H1491.0M694.3 586.8H1491.0M694.3 623.0H1491.0M1524.7 378.0V649.8M1491.0 405.8H1557.2M1491 405.8 Q1530 410.0 1558 417.8M1491 442.0 Q1530 445.9 1558 453.0M1491 478.2 Q1530 479.6 1558 482.2M1491 514.4 Q1530 514.8 1558 515.4M1491 550.6 Q1530 548.9 1558 545.6M1491 586.8 Q1530 583.6 1558 577.8M1491 623.0 Q1530 618.8 1558 611.0M535.6 377.5 L535.2 450.0 L535.4 520.0 L536.0 650.0M556.0 377.5 L553.6 420.0 L553.4 520.0 L554.0 650.0M577.0 377.5 L572.3 405.0 L571.8 520.0 L571.4 650.0M592.0 377.5 L589.6 420.0 L589.4 520.0 L589.6 650.0M608.0 377.5 L607.8 389.0M624.6 377.5 L624.6 650.0M659.7 377.5 L659.7 650.0M677.0 442.5 L677.0 623.0M545.0 514.5 L545.0 564.0M529.0 480.0 L529.0 650.0M527.3 377.5 L527.3 389.0M530.8 377.5 L530.8 389.0M546.0 377.5 L545.5 414.0M564.0 377.5 L563.5 396.0M607.4 622.0 L609.0 637.0 L628.0 650.0M545.0 615.0 L545.4 650.0M564.0 630.5 L566.0 650.0M572.0 636.0 L578.0 650.0M523.0 391.3 Q570.2 389.0 624.6 388.0M523.0 399.4 Q570.2 394.1 624.6 390.4M523.0 408.4 Q548.5 406.3 572.0 405.0M523.0 417.4 Q569.4 405.6 694.3 405.8M523.0 433.0 Q555.8 430.0 589.5 427.0M523.0 448.5 Q569.4 443.5 694.3 442.0M523.0 480.0 Q611.4 478.9 694.3 478.2M523.0 514.0 Q611.4 513.8 694.3 514.4M523.0 531.8 Q611.4 530.6 694.3 532.5M523.0 549.0 Q640.6 552.6 694.3 550.6M523.0 564.0 Q555.8 561.5 589.5 559.0M523.0 580.3 Q569.4 584.0 694.3 586.8M523.0 598.0 Q555.8 599.5 589.5 601.0M523.0 610.6 Q569.4 620.8 694.3 623.0M523.0 623.0 Q565.0 632.1 607.0 636.8M523.0 632.0 Q545.5 637.5 566.0 641.0M523.0 640.0 Q540.5 643.5 556.0 647.0M523.0 383.5 Q540.5 383.0 556.0 382.5M659.7 604.9 Q677.0 604.9 694.3 604.9M659.7 568.7 Q677.0 568.7 694.3 568.7M659.7 460.1 Q677.0 460.1 694.3 460.1M659.7 496.3 Q677.0 496.3 694.3 496.3M524.4 378.0V390.2M528.9 378.0V390.2M533.5 378.0V390.2M538.0 378.0V390.2M523.0 381.0H538.2M523.0 385.4H538.2M523.0 389.7H538.2M523.0 385.3 L556.0 384.6M541.6 378.0 L541.4 392.0M550.6 378.0 L550.4 396.0M524.4 632.0V649.8M529.0 632.0V649.8M533.6 632.0V649.8M538.2 632.0V649.8M523.0 634.0H541.0M523.0 638.5H541.0M523.0 643.0H541.0M523.0 647.5H541.0M694.3 405.8V442.0M711.6 405.8V442.0M728.9 405.8V442.0M746.2 405.8V442.0M763.5 405.8V442.0M780.8 405.8V442.0M798.1 405.8V442.0M815.4 405.8V442.0M832.7 405.8V442.0M850.0 405.8V442.0M867.3 405.8V442.0M884.6 405.8V442.0M694.3 405.8H901.3M694.3 423.9H901.3M694.3 442.0H901.3M694.3 442.0V604.9M711.6 442.0V604.9M728.9 442.0V604.9M746.2 442.0V604.9M763.5 442.0V604.9M780.8 442.0V604.9M798.1 442.0V604.9M815.4 442.0V604.9M832.7 442.0V604.9M850.0 442.0V604.9M867.3 442.0V604.9M884.6 442.0V604.9M901.9 442.0V604.9M919.2 442.0V604.9M936.5 442.0V604.9M953.8 442.0V604.9M971.1 442.0V604.9M988.4 442.0V604.9M694.3 442.0H1005.0M694.3 460.1H1005.0M694.3 478.2H1005.0M694.3 496.3H1005.0M694.3 514.4H1005.0M694.3 532.5H1005.0M694.3 550.6H1005.0M694.3 568.7H1005.0M694.3 586.8H1005.0M694.3 604.9H1005.0M694.3 604.9V623.0M711.6 604.9V623.0M728.9 604.9V623.0M746.2 604.9V623.0M763.5 604.9V623.0M780.8 604.9V623.0M798.1 604.9V623.0M815.4 604.9V623.0M832.7 604.9V623.0M850.0 604.9V623.0M867.3 604.9V623.0M884.6 604.9V623.0M901.9 604.9V623.0M919.2 604.9V623.0M936.5 604.9V623.0M953.8 604.9V623.0M694.3 604.9H970.3M694.3 623.0H970.3M754.8 442.0V460.1M763.5 442.0V460.1M772.1 442.0V460.1M780.8 442.0V460.1M789.4 442.0V460.1M798.1 442.0V460.1M806.8 442.0V460.1M815.4 442.0V460.1M824.0 442.0V460.1M832.7 442.0V460.1M841.3 442.0V460.1M850.0 442.0V460.1M858.6 442.0V460.1M867.3 442.0V460.1M754.8 442.0H867.3M754.8 451.1H867.3M754.8 460.1H867.3M728.9 460.1V478.2M737.5 460.1V478.2M746.2 460.1V478.2M754.8 460.1V478.2M763.5 460.1V478.2M772.1 460.1V478.2M780.8 460.1V478.2M789.4 460.1V478.2M798.1 460.1V478.2M806.8 460.1V478.2M815.4 460.1V478.2M824.0 460.1V478.2M832.7 460.1V478.2M841.3 460.1V478.2M850.0 460.1V478.2M858.6 460.1V478.2M867.3 460.1V478.2M875.9 460.1V478.2M884.6 460.1V478.2M893.2 460.1V478.2M901.9 460.1V478.2M728.9 460.1H901.9M728.9 469.2H901.9M728.9 478.2H901.9M711.6 478.2V568.7M720.2 478.2V568.7M728.9 478.2V568.7M737.5 478.2V568.7M746.2 478.2V568.7M754.8 478.2V568.7M763.5 478.2V568.7M772.1 478.2V568.7M780.8 478.2V568.7M789.4 478.2V568.7M798.1 478.2V568.7M806.8 478.2V568.7M815.4 478.2V568.7M824.0 478.2V568.7M832.7 478.2V568.7M841.3 478.2V568.7M850.0 478.2V568.7M858.6 478.2V568.7M867.3 478.2V568.7M875.9 478.2V568.7M884.6 478.2V568.7M893.2 478.2V568.7M901.9 478.2V568.7M910.5 478.2V568.7M919.2 478.2V568.7M927.8 478.2V568.7M936.5 478.2V568.7M945.1 478.2V568.7M953.8 478.2V568.7M711.6 478.2H953.8M711.6 487.2H953.8M711.6 496.3H953.8M711.6 505.4H953.8M711.6 514.4H953.8M711.6 523.5H953.8M711.6 532.5H953.8M711.6 541.5H953.8M711.6 550.6H953.8M711.6 559.7H953.8M711.6 568.7H953.8M728.9 568.7V586.8M737.5 568.7V586.8M746.2 568.7V586.8M754.8 568.7V586.8M763.5 568.7V586.8M772.1 568.7V586.8M780.8 568.7V586.8M789.4 568.7V586.8M798.1 568.7V586.8M806.8 568.7V586.8M815.4 568.7V586.8M824.0 568.7V586.8M832.7 568.7V586.8M841.3 568.7V586.8M850.0 568.7V586.8M858.6 568.7V586.8M867.3 568.7V586.8M875.9 568.7V586.8M884.6 568.7V586.8M893.2 568.7V586.8M901.9 568.7V586.8M910.5 568.7V586.8M919.2 568.7V586.8M927.8 568.7V586.8M936.5 568.7V586.8M728.9 568.7H936.5M728.9 577.8H936.5M728.9 586.8H936.5M1516.0 378.0V405.0M1524.7 378.0V405.0M1533.3 378.0V405.0M1542.0 378.0V405.0M1550.7 378.0V405.0M1508.3 378.7H1557.2M1508.3 387.7H1557.2M1508.3 396.8H1557.2M1473.0 377.5 L1473.5 408.0M1455.5 388.0 L1500.0 390.0 L1558.0 397.0M1491.0 428.0 L1530.0 431.0 L1558.0 434.0M1509.0 405.0 L1510.0 446.0M1545.0 430.0 L1545.5 449.0M1509.0 583.0 L1508.0 650.0M1491.0 600.0 L1530.0 596.0 L1558.0 594.0M1473.0 622.0 L1471.0 650.0M1533.3 628.0V649.8M1542.0 628.0V649.8M1550.7 628.0V649.8M1525.6 632.1H1557.2M1525.6 641.1H1557.2M1455.0 640.0 L1500.0 634.0 L1545.0 630.0M1545.0 580.0 L1545.0 613.0 L1552.0 613.0 L1552.0 650.0" stroke="#000" stroke-width="1.25" fill="none" opacity="0.9"/><path d="M754.8 469.2V496.3M759.2 469.2V496.3M763.5 469.2V496.3M767.8 469.2V496.3M772.1 469.2V496.3M776.5 469.2V496.3M780.8 469.2V496.3M785.1 469.2V496.3M789.4 469.2V496.3M793.8 469.2V496.3M798.1 469.2V496.3M802.4 469.2V496.3M806.8 469.2V496.3M811.1 469.2V496.3M815.4 469.2V496.3M819.7 469.2V496.3M824.0 469.2V496.3M828.4 469.2V496.3M832.7 469.2V496.3M837.0 469.2V496.3M841.3 469.2V496.3M845.7 469.2V496.3M850.0 469.2V496.3M854.3 469.2V496.3M754.8 473.7H858.6M754.8 478.2H858.6M754.8 482.7H858.6M754.8 487.2H858.6M754.8 491.8H858.6M754.8 496.3H858.6M737.5 496.3V541.5M741.9 496.3V541.5M746.2 496.3V541.5M750.5 496.3V541.5M754.8 496.3V541.5M759.2 496.3V541.5M763.5 496.3V541.5M767.8 496.3V541.5M772.1 496.3V541.5M776.5 496.3V541.5M780.8 496.3V541.5M785.1 496.3V541.5M789.4 496.3V541.5M793.8 496.3V541.5M798.1 496.3V541.5M802.4 496.3V541.5M806.8 496.3V541.5M811.1 496.3V541.5M815.4 496.3V541.5M819.7 496.3V541.5M824.0 496.3V541.5M828.4 496.3V541.5M832.7 496.3V541.5M837.0 496.3V541.5M841.3 496.3V541.5M845.7 496.3V541.5M850.0 496.3V541.5M854.3 496.3V541.5M858.6 496.3V541.5M863.0 496.3V541.5M867.3 496.3V541.5M871.6 496.3V541.5M875.9 496.3V541.5M880.3 496.3V541.5M884.6 496.3V541.5M888.9 496.3V541.5M893.2 496.3V541.5M897.6 496.3V541.5M901.9 496.3V541.5M906.2 496.3V541.5M910.5 496.3V541.5M914.9 496.3V541.5M919.2 496.3V541.5M737.5 496.3H919.2M737.5 500.8H919.2M737.5 505.4H919.2M737.5 509.9H919.2M737.5 514.4H919.2M737.5 518.9H919.2M737.5 523.5H919.2M737.5 528.0H919.2M737.5 532.5H919.2M737.5 537.0H919.2M763.5 541.5V555.2M767.8 541.5V555.2M772.1 541.5V555.2M776.5 541.5V555.2M780.8 541.5V555.2M785.1 541.5V555.2M789.4 541.5V555.2M793.8 541.5V555.2M798.1 541.5V555.2M802.4 541.5V555.2M806.8 541.5V555.2M811.1 541.5V555.2M815.4 541.5V555.2M819.7 541.5V555.2M824.0 541.5V555.2M828.4 541.5V555.2M832.7 541.5V555.2M837.0 541.5V555.2M841.3 541.5V555.2M845.7 541.5V555.2M850.0 541.5V555.2M854.3 541.5V555.2M858.6 541.5V555.2M863.0 541.5V555.2M867.3 541.5V555.2M871.6 541.5V555.2M875.9 541.5V555.2M880.3 541.5V555.2M884.6 541.5V555.2M888.9 541.5V555.2M893.2 541.5V555.2M897.6 541.5V555.2M901.9 541.5V555.2M763.5 541.5H906.2M763.5 546.1H906.2M763.5 550.6H906.2M763.5 555.1H906.2" stroke="#000" stroke-width="1.05" fill="none" opacity="0.9"/><path d="M754.8 484.9V523.5M757.0 484.9V523.5M759.2 484.9V523.5M761.3 484.9V523.5M763.5 484.9V523.5M765.7 484.9V523.5M767.8 484.9V523.5M770.0 484.9V523.5M772.1 484.9V523.5M774.3 484.9V523.5M776.5 484.9V523.5M778.6 484.9V523.5M780.8 484.9V523.5M783.0 484.9V523.5M785.1 484.9V523.5M787.3 484.9V523.5M789.4 484.9V523.5M791.6 484.9V523.5M793.8 484.9V523.5M795.9 484.9V523.5M798.1 484.9V523.5M800.3 484.9V523.5M802.4 484.9V523.5M804.6 484.9V523.5M806.8 484.9V523.5M808.9 484.9V523.5M811.1 484.9V523.5M813.2 484.9V523.5M815.4 484.9V523.5M817.6 484.9V523.5M819.7 484.9V523.5M821.9 484.9V523.5M824.0 484.9V523.5M826.2 484.9V523.5M828.4 484.9V523.5M830.5 484.9V523.5M832.7 484.9V523.5M834.9 484.9V523.5M837.0 484.9V523.5M839.2 484.9V523.5M841.3 484.9V523.5M843.5 484.9V523.5M845.7 484.9V523.5M847.8 484.9V523.5M850.0 484.9V523.5M852.2 484.9V523.5M754.8 485.0H852.2M754.8 487.2H852.2M754.8 489.5H852.2M754.8 491.8H852.2M754.8 494.0H852.2M754.8 496.3H852.2M754.8 498.6H852.2M754.8 500.8H852.2M754.8 503.1H852.2M754.8 505.4H852.2M754.8 507.6H852.2M754.8 509.9H852.2M754.8 512.1H852.2M754.8 514.4H852.2M754.8 516.7H852.2M754.8 518.9H852.2M754.8 521.2H852.2M754.8 523.5H852.2M763.5 523.5V528.0M765.7 523.5V528.0M767.8 523.5V528.0M770.0 523.5V528.0M772.1 523.5V528.0M774.3 523.5V528.0M776.5 523.5V528.0M778.6 523.5V528.0M780.8 523.5V528.0M783.0 523.5V528.0M785.1 523.5V528.0M787.3 523.5V528.0M789.4 523.5V528.0M791.6 523.5V528.0M793.8 523.5V528.0M795.9 523.5V528.0M798.1 523.5V528.0M800.3 523.5V528.0M802.4 523.5V528.0M804.6 523.5V528.0M806.8 523.5V528.0M808.9 523.5V528.0M811.1 523.5V528.0M813.2 523.5V528.0M815.4 523.5V528.0M817.6 523.5V528.0M819.7 523.5V528.0M821.9 523.5V528.0M824.0 523.5V528.0M826.2 523.5V528.0M828.4 523.5V528.0M830.5 523.5V528.0M832.7 523.5V528.0M834.9 523.5V528.0M837.0 523.5V528.0M839.2 523.5V528.0M841.3 523.5V528.0M843.5 523.5V528.0M845.7 523.5V528.0M847.8 523.5V528.0M850.0 523.5V528.0M763.5 525.7H850.0M763.5 528.0H850.0" stroke="#000" stroke-width="1.05" fill="none" opacity="0.88"/>
<path d="M630.3 378 L624.6 389.6 L611.5 407.6 L588.6 432 L572 447 L552.6 467.3 L533 474.7 L524 481 L524.6 479 L527.6 496.6 L535.4 506.4 L545 524 L555 537.6 L558.8 545.4 Q572 554 588 557 T624 558 L642.7 551 L658.3 546.4 L676 529.8 L693.4 514 L705 512.6 L717 513 L724.7 515 L730.5 520 M752.8 516.8 L754.7 509 L747 501.7 L735.8 497 L747 492.3 L756.6 488.5 L771.7 486.6 L783 484.7 L794.3 479 L798 471.5 Q805 465.5 820.8 463 Q836 466 842.5 477 L845 484.7 L853 490 L858 497 L862 504 M772 548 C770 565 790 566 800 560 C815 548 830 550 838 560 C842 572 850 565 856 556 M880 545 C880 560 890 565 900 556 C905 545 905 540 903 532 M838 560 C850 590 835 620 800 640 L790 650 M918 466 L952 500 L950 512 L905 540 M918 466 L880 495 M1384 378 L1415 404.3 L1392.8 408.3 L1316.4 411.5 L1179.5 416.4 L1143.2 440.5 L1136 476.7 L1163.4 513 L1247.9 553.2 L1312.3 587.5 L1247.9 605.6 L1111 623.7 L1095 623.7 L1074.8 648.5 L1058.7 625.7 L1038.6 619.7 L1006.4 589.5 L988 585.4 L950 577.4 M951.6 566.2 L969.7 560 L987.9 561 L1010 568 M951.6 566.2 L950.6 580 L953.6 590.3 L971.7 589.3 L1010 587.3 M971.7 589.3 L995.9 622.5 L971.7 650 M1450 377.5 L1470 400 L1500 425 L1540 434 L1557 425 M1420 650 L1450 636 L1520 630 L1557 640" stroke="#000" stroke-width="1.1" fill="none" opacity="0.88" stroke-linejoin="round"/>
<path d="M846 515.5 H894 Q899 516 899 521 Q899 525.5 894 525.5 H846Z" fill="#000"/><path d="M868 522 H884" stroke="#777" stroke-width="0.7"/><rect x="882" y="519.4" width="15" height="4.6" rx="2.3" fill="#e8d020" filter="url(#fb1)"/><path d="M768.5 493.8 H843 Q846.6 493.8 846.6 497 V519 Q846.6 522.6 843 522.6 H790 C780 522.6 772 521 768.6 517.6 Q767 515.5 768 512 Q769.6 508 769 504 L766.6 496.5 Q766.2 493.8 768.5 493.8Z" fill="url(#gHull)" stroke="#f2dc1c" stroke-width="2.6" stroke-linejoin="round" filter="url(#fb05)"/><path d="M769.5 513.4 L845.2 514.6 V519 Q845.2 521.2 843 521.2 H790 C780 521.2 773 520 769.6 517Z" fill="#b4e2f2"/>
</g>
<rect x="511.2" y="477.8" width="214" height="75.6" fill="none" stroke="#f5b312" stroke-width="3.2"/>
<rect x="981" y="461.4" width="584" height="109.6" fill="none" stroke="#f5b312" stroke-width="3.2"/>
</svg>

<!-- ===== AXES ===== -->
<svg class="abs" style="left:390px;top:750px;font-family:'Liberation Sans',sans-serif" width="170" height="160">
<defs><linearGradient id="gBox" x1="0" y1="0" x2="0" y2="1"><stop offset="0" stop-color="#ffffff"/><stop offset="0.35" stop-color="#f2f2f2"/><stop offset="1" stop-color="#e2e2e2"/></linearGradient></defs>
<rect x="44" y="55" width="74" height="65" fill="url(#gBox)"/>
<path d="M42 121 V38" stroke="#0000e6" stroke-width="3.2"/><path d="M42 28 L46.4 40.5 H37.6Z" fill="#0000c8"/>
<path d="M42 121 H126" stroke="#e60000" stroke-width="3.2"/><path d="M135 121 L124.5 116.4 V125.6Z" fill="#b00000"/>
<text x="80.5" y="87.8" font-size="18" font-weight="bold" fill="#333" text-anchor="middle">Neg Y</text>
<text x="36.5" y="16.4" font-size="14" fill="#111">z</text>
<text x="138.6" y="118.8" font-size="14" fill="#111">x</text>
<path d="M18.3 7.2 L28.6 17.6 H25 V25 H11.6 V17.6 H8Z" fill="#000"/><rect x="23.3" y="8" width="1.4" height="5" fill="#000"/>
<path transform="translate(80 22.8) rotate(0)" d="M0 -8 L8.6 1 H3.6 V7.6 H-3.6 V1 H-8.6Z" fill="#000"/>
<path transform="translate(80 142.6) rotate(180)" d="M0 -8 L8.6 1 H3.6 V7.6 H-3.6 V1 H-8.6Z" fill="#000"/>
<path transform="translate(20 82.8) rotate(-90)" d="M0 -8 L8.6 1 H3.6 V7.6 H-3.6 V1 H-8.6Z" fill="#000"/>
<path transform="translate(140 82.8) rotate(90)" d="M0 -8 L8.6 1 H3.6 V7.6 H-3.6 V1 H-8.6Z" fill="#000"/>
<g transform="translate(135 32.4) rotate(-45)"><path d="M0 -17.6 L7.6 -8 H2.7 V8 H7.6 L0 17.6 L-7.6 8 H-2.7 V-8 H-7.6Z" fill="#000"/></g>
</svg>
<div class="t" style="left:574.5px;top:892.5px;color:#222">Time 0.11850 (351)</div>

<!-- ===== STATS ===== -->
<div class="abs" style="left:1130px;top:698px;width:413px;height:178px;background:#e8e8e8"></div>
<div class="abs" style="left:1134px;top:745px;width:405px;height:86px;background:#fff"></div>
<div class="abs" style="left:1134px;top:834px;width:405px;height:38px;background:#fff"></div>
<div class="st" style="left:1145.5px;top:713px">Cutting Planes: 1</div>
<div class="st" style="right:63.5px;top:713px">alpha.phase1 [node]</div>
<div class="st b" style="left:1144px;top:754px">Surface Area</div>
<div class="st" style="right:66.5px;top:754px">1.986e+3 m²</div>
<div class="st b" style="left:1143.5px;top:779px">Minimum</div>
<div class="st b" style="left:1236px;width:200px;text-align:center;top:779px">Average</div>
<div class="st b" style="right:62px;top:779px">Maximum</div>
<div class="st" style="left:1143.5px;top:802px">0e+0 -</div>
<div class="st" style="left:1236px;width:200px;text-align:center;top:802px">4.565e-1 -</div>
<div class="st" style="right:62px;top:802px">1e+0 -</div>
<div class="st b" style="left:1143.5px;top:844px">Integral</div>
<div class="st" style="right:66.5px;top:844px">9.066e+2 (-) · m²</div>
<!-- chat -->
<div class="abs" style="left:1541px;top:661.5px;width:49px;height:50.5px;background:#0073a8;border-radius:5px 0 0 5px"></div>
<svg class="abs" style="left:1555px;top:676px" width="22" height="22"><ellipse cx="11.5" cy="10" rx="8.3" ry="6.3" fill="#fff"/><path d="M5.5 13 L3.2 17.2 L9.5 15.5Z" fill="#fff"/></svg>
</body></html>
